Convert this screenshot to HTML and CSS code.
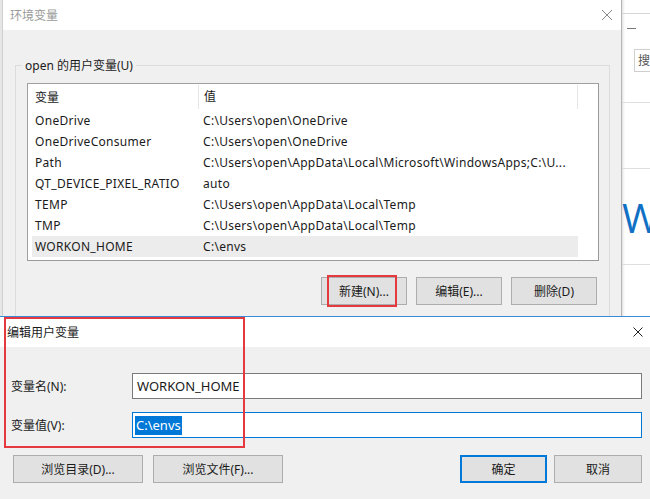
FILE: index.html
```html
<!DOCTYPE html>
<html>
	<head>
		<meta charset="utf-8">
		<meta name="viewport" content="width=device-width, initial-scale=1.0">
		<title>环境变量</title>
		<link rel="stylesheet" href="styles.css">
	</head>
	<body>
		<div class="desktop">
			<!-- 右边露出来的一点点设置窗口 -->
			<div class="side-window">
				<div class="side-head"></div>
				<div class="side-min"></div>
				<div class="side-search">搜</div>
				<div class="side-sep first"></div>
				<div class="side-sep second"></div>
				<div class="side-w">W</div>
				<div class="side-sep third"></div>
			</div>

			<div class="dialog env">
				<div class="titlebar">
					<span class="title dim">环境变量</span>
					<svg class="close" width="12" height="12" viewBox="0 0 12 12"><path d="M1 1 L11 11 M11 1 L1 11" stroke="#8a8a8a" stroke-width="1" fill="none"/></svg>
				</div>
				<div class="dialog-body">
					<fieldset class="group">
						<legend>open 的用户变量(U)</legend>
						<div class="list">
							<div class="list-head">
								<div class="c1">变量</div>
								<div class="c2">值</div>
							</div>
							<div class="row"><div class="c1">OneDrive</div><div class="c2">C:\Users\open\OneDrive</div></div>
							<div class="row"><div class="c1">OneDriveConsumer</div><div class="c2">C:\Users\open\OneDrive</div></div>
							<div class="row"><div class="c1">Path</div><div class="c2">C:\Users\open\AppData\Local\Microsoft\WindowsApps;C:\U...</div></div>
							<div class="row"><div class="c1">QT_DEVICE_PIXEL_RATIO</div><div class="c2">auto</div></div>
							<div class="row"><div class="c1">TEMP</div><div class="c2">C:\Users\open\AppData\Local\Temp</div></div>
							<div class="row"><div class="c1">TMP</div><div class="c2">C:\Users\open\AppData\Local\Temp</div></div>
							<div class="row selected"><div class="c1">WORKON_HOME</div><div class="c2">C:\envs</div></div>
						</div>
						<div class="btn-row">
							<div class="btn small">新建(N)...</div>
							<div class="btn small">编辑(E)...</div>
							<div class="btn small">删除(D)</div>
						</div>
					</fieldset>
				</div>
			</div>

			<div class="dialog edit">
				<div class="titlebar">
					<span class="title">编辑用户变量</span>
					<svg class="close" width="12" height="12" viewBox="0 0 12 12"><path d="M1.5 1.5 L10.5 10.5 M10.5 1.5 L1.5 10.5" stroke="#222" stroke-width="1" fill="none"/></svg>
				</div>
				<div class="edit-body">
					<div class="field">
						<div class="label">变量名(N):</div>
						<div class="textbox">WORKON_HOME</div>
					</div>
					<div class="field">
						<div class="label">变量值(V):</div>
						<div class="textbox focus"><span class="sel">C:\envs</span></div>
					</div>
					<div class="edit-btns">
						<div class="btn wide">浏览目录(D)...</div>
						<div class="btn wide">浏览文件(F)...</div>
						<div class="spacer"></div>
						<div class="btn ok">确定</div>
						<div class="btn cancel">取消</div>
					</div>
				</div>
			</div>

			<!-- 截图上的红框标注 -->
			<div class="mark mark-new"></div>
			<div class="mark mark-edit"></div>
		</div>
	</body>
</html>
```

FILE: styles.css
```css
* {
	/* 清掉默认边距 */
	margin: 0;
	padding: 0;
	box-sizing: border-box;
}

body {
	width: 650px;
	height: 499px;
	overflow: hidden;
	background: #e6e6e6;
	font-family: "Noto Sans", "Noto Sans CJK SC", sans-serif;
	font-size: 12px;
	color: #1a1a1a;
}

.desktop {
	position: relative;
	width: 650px;
	height: 499px;
}

/* ---------- 右边的背景窗口 ---------- */
.side-window {
	position: absolute;
	left: 622px;
	top: 0;
	width: 28px;
	height: 317px;
	background: #fff;
	overflow: hidden;
	box-shadow: inset 3px 0 3px -2px rgba(0, 0, 0, 0.15);
}

.side-head {
	height: 14px;
	border-bottom: 1px solid #d6d6d6;
}

.side-min {
	width: 9px;
	height: 1px;
	margin: 14px 0 0 5px;
	background: #777;
}

.side-search {
	height: 23px;
	margin: 20px 0 0 12px;
	padding-left: 3px;
	border: 1px solid #cfcfcf;
	border-right: none;
	line-height: 21px;
	color: #555;
	white-space: nowrap;
}

.side-sep {
	border-top: 1px solid #dedede;
}

.side-sep.first {
	margin-top: 30px;
}

.side-sep.second {
	margin-top: 65px;
}

.side-w {
	margin: 29px 0 0 0;
	font-family: "Open Sans", "Noto Sans", sans-serif;
	font-size: 40px;
	line-height: 40px;
	color: #1070c4;
}

.side-sep.third {
	margin-top: 26px;
}

/* ---------- 通用对话框 ---------- */
.dialog {
	position: absolute;
	background: #f0f0f0;
}

.titlebar {
	height: 30px;
	display: flex;
	align-items: center;
	justify-content: space-between;
	background: #fff;
	padding: 0 10px 0 7px;
}

.title.dim {
	color: #9a9a9a;
}

/* ---------- 环境变量 ---------- */
.env {
	left: 2px;
	top: 0;
	width: 620px;
	height: 330px;
	border-left: 1px solid #cfcfcf;
	border-right: 1px solid #b5b5b5;
}

.env .titlebar {
	padding-left: 7px;
	padding-right: 8px;
}

.dialog-body {
	padding: 27px 11px 0 12px;
}

.group {
	border: 1px solid #dcdcdc;
	height: 300px;
	padding: 0 10px 0 11px;
}

.group legend {
	margin-left: -5px;
	padding: 0 3px;
	line-height: 17px;
}

.list {
	margin-top: 9px;
	height: 178px;
	background: #fff;
	border: 1px solid #8f8f8f;
	border-color: #a0a0a0 #9a9a9a #9a9a9a #a0a0a0;
}

.list-head {
	display: flex;
	width: 550px;
	height: 26px;
	align-items: center;
}

.list-head .c1 {
	width: 170px;
	padding-left: 7px;
}

.list-head .c2 {
	flex: 1;
	height: 24px;
	line-height: 24px;
	padding-left: 5px;
	border-left: 1px solid #e5e5e5;
	border-right: 1px solid #e5e5e5;
}

.row {
	display: flex;
	width: 546px;
	height: 21px;
	margin-left: 4px;
	line-height: 21px;
	white-space: nowrap;
	/* 原图的字体比较宽 拉开一点 */
	letter-spacing: 0.3px;
}

.row .c1 {
	width: 166px;
	padding-left: 3px;
}

.row .c2 {
	flex: 1;
	padding-left: 5px;
	overflow: hidden;
}

.row.selected {
	background: #ececec;
}

.btn-row {
	display: flex;
	justify-content: flex-end;
	gap: 9px;
	margin: 16px 2px 0 0;
}

.btn {
	height: 28px;
	display: flex;
	align-items: center;
	justify-content: center;
	background: #e1e1e1;
	border: 1px solid #adadad;
	white-space: nowrap;
}

.btn.small {
	width: 86px;
	height: 28px;
}

/* ---------- 编辑用户变量 ---------- */
.edit {
	left: 0;
	top: 316px;
	width: 650px;
	height: 183px;
	border-top: 1px solid #3a8ad6;
}

.edit .titlebar {
	padding-right: 6px;
}

.edit-body {
	padding: 26px 8px 0 11px;
}

.field {
	display: flex;
	align-items: center;
	margin-bottom: 13px;
}

.label {
	width: 121px;
}

.textbox {
	width: 510px;
	height: 26px;
	padding-left: 4px;
	line-height: 24px;
	background: #fff;
	border: 1px solid #7a7a7a;
	font-size: 13px;
}

.textbox.focus {
	border-color: #0078d7;
	padding-left: 2px;
}

.sel {
	display: inline-block;
	line-height: 19px;
	padding: 0 1px;
	background: #0078d7;
	color: #fff;
}

.edit-btns {
	display: flex;
	margin: 17px 0 0 2px;
	gap: 10px;
}

.btn.wide {
	width: 130px;
}

.spacer {
	flex: 1;
}

.btn.ok {
	width: 87px;
	border: 2px solid #0078d7;
}

.btn.cancel {
	width: 88px;
	margin-left: -3px;
}

/* ---------- 红框 ---------- */
.mark {
	position: absolute;
	border: 2px solid #e4393f;
}

.mark-new {
	left: 327px;
	top: 275px;
	width: 70px;
	height: 32px;
}

.mark-edit {
	left: 4px;
	top: 317px;
	width: 241px;
	height: 131px;
}
```
